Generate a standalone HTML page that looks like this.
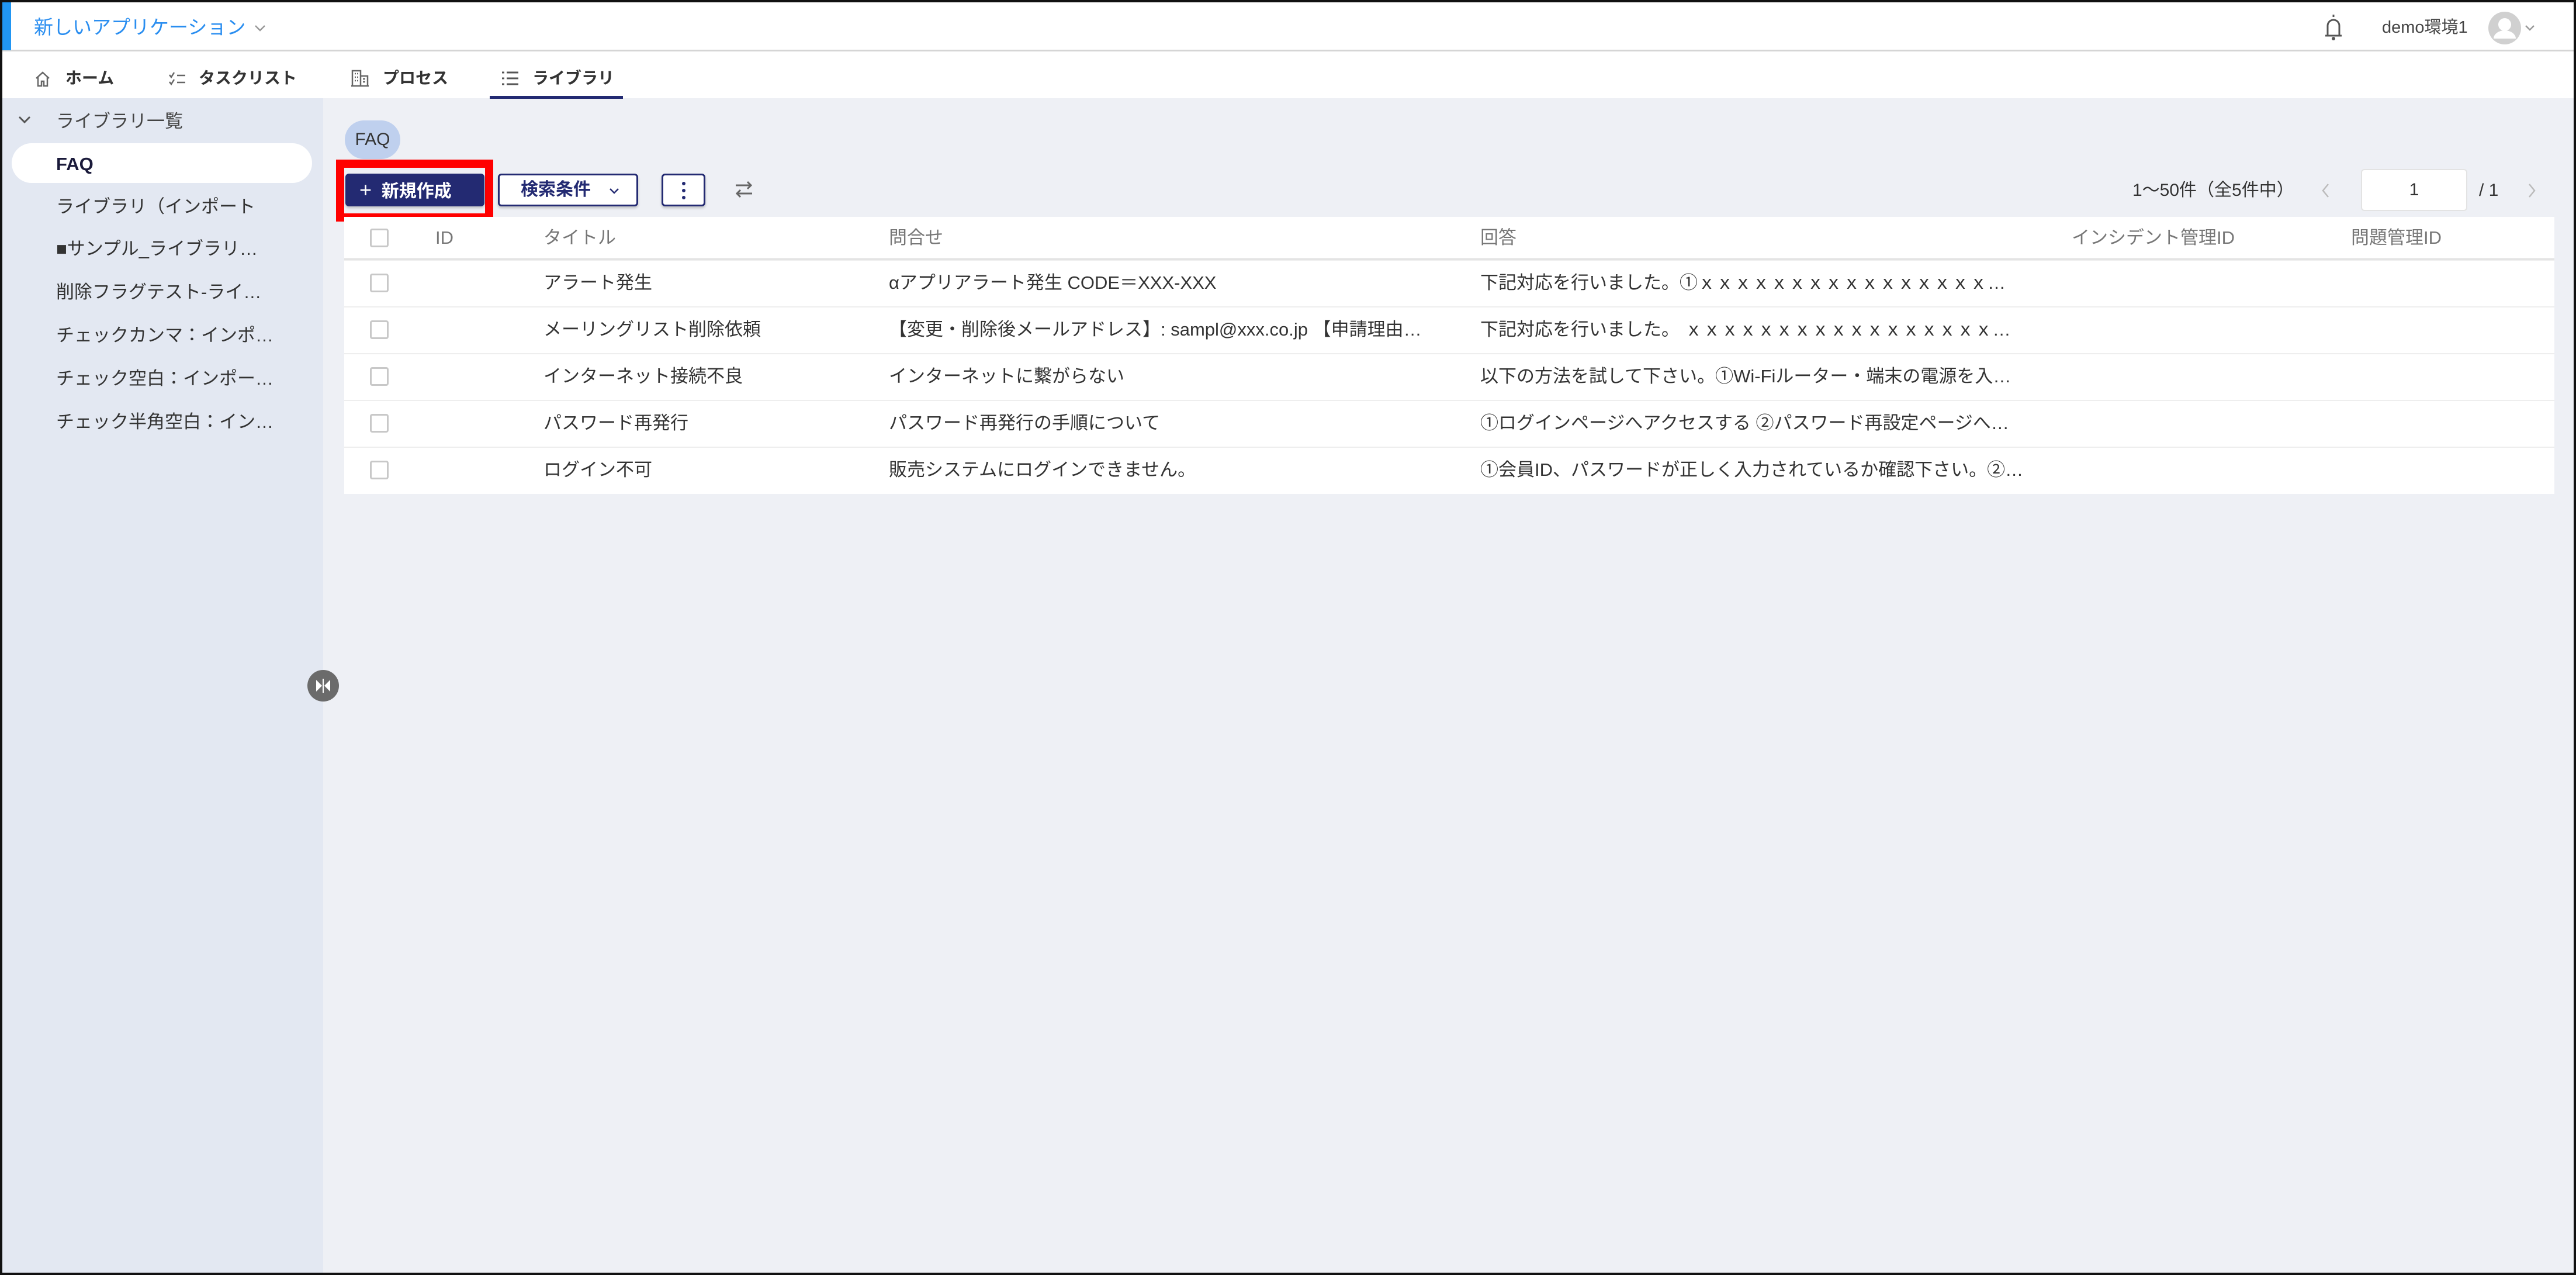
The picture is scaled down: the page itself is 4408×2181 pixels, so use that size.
<!DOCTYPE html>
<html><head><meta charset="utf-8"><style>
*{margin:0;padding:0;box-sizing:border-box}
body{width:4408px;height:2181px;overflow:hidden;background:#eef0f5;font-family:"Liberation Sans","Noto Sans CJK JP",sans-serif;color:#333;position:relative}
.a{position:absolute;white-space:nowrap}
.frame{position:absolute;left:0;top:0;width:4408px;height:2181px;border:4px solid #111;z-index:50;pointer-events:none}
.top{position:absolute;left:0;top:0;width:4408px;height:88px;background:#fff;border-bottom:3px solid #d5d5d5}
.nav{position:absolute;left:0;top:88px;width:4408px;height:80px;background:#fff}
.tab{position:absolute;top:114px;font-size:28px;font-weight:bold;color:#333;line-height:40px;white-space:nowrap}
.side{position:absolute;left:0;top:168px;width:553px;height:2013px;background:#e3e8f2}
.si{position:absolute;left:96px;font-size:31px;color:#333;line-height:44px;width:400px;overflow:hidden;text-overflow:ellipsis;white-space:nowrap}
.table{position:absolute;left:589px;top:371px;width:3782px;height:474px;background:#fff}
.row{position:absolute;left:0;width:3782px;height:80px;border-top:2px solid #eeeeee}
.cb{position:absolute;left:44px;width:32px;height:32px;border:3px solid #c8c8c8;border-radius:4px;background:#fff}
.c{position:absolute;font-size:31px;line-height:44px;color:#333;overflow:hidden;text-overflow:ellipsis;white-space:nowrap}
.h{color:#777}
.btn{position:absolute;top:297px;height:56px;border-radius:6px;font-size:30px;font-weight:bold;line-height:50px;box-shadow:0 3px 4px rgba(0,0,0,.2);white-space:nowrap}
</style></head><body>
<div class="frame"></div>
<div class="top"></div>
<div class="a" style="left:4px;top:4px;width:15px;height:82px;background:#2196f3"></div>
<div class="a" style="left:58px;top:24px;font-size:33px;color:#2a8ef0;line-height:46px">新しいアプリケーション</div>
<svg class="a" style="left:434px;top:40px" width="22" height="16" viewBox="0 0 22 16"><path d="M3 4l8 8 8-8" fill="none" stroke="#999" stroke-width="2.5"/></svg>
<svg class="a" style="left:3975px;top:22px" width="36" height="50" viewBox="0 0 36 50"><path d="M18 3v4M8 38V22a10 10 0 0 1 20 0v16M4 39h28" fill="none" stroke="#555" stroke-width="3"/><circle cx="18" cy="44" r="3" fill="#555"/></svg>
<div class="a" style="left:4076px;top:26px;font-size:29px;color:#444;line-height:42px">demo環境1</div>
<svg class="a" style="left:4258px;top:20px" width="56" height="56" viewBox="0 0 56 56"><circle cx="28" cy="28" r="28" fill="#d0d0d0"/><circle cx="28" cy="22" r="11" fill="#fff"/><path d="M9 46a19 14 0 0 1 38 0" fill="#fff"/></svg>
<svg class="a" style="left:4318px;top:40px" width="22" height="16" viewBox="0 0 22 16"><path d="M4 4l7 7 7-7" fill="none" stroke="#999" stroke-width="2.5"/></svg>

<div class="nav"></div>
<svg class="a" style="left:58px;top:120px" width="30" height="30" viewBox="0 0 30 30"><path d="M4 14L15 4l11 10M7 12v15h6v-8h4v8h6V12" fill="none" stroke="#666" stroke-width="2.5"/></svg>
<div class="tab" style="left:112px">ホーム</div>
<svg class="a" style="left:288px;top:120px" width="32" height="30" viewBox="0 0 32 30"><path d="M2 8l3 4 5-8M2 20l3 4 5-8M15 9h14M15 21h14" fill="none" stroke="#666" stroke-width="2.5"/></svg>
<div class="tab" style="left:340px">タスクリスト</div>
<svg class="a" style="left:600px;top:118px" width="32" height="32" viewBox="0 0 32 32"><path d="M3 29V3h14v26M17 12h12v17M1 29h30M7 8h2M11 8h2M7 14h2M11 14h2M7 20h2M11 20h2M21 17h4M21 22h4" fill="none" stroke="#666" stroke-width="2.5"/></svg>
<div class="tab" style="left:655px">プロセス</div>
<svg class="a" style="left:857px;top:120px" width="32" height="28" viewBox="0 0 32 28"><path d="M2 4h4M10 4h20M2 14h4M10 14h20M2 24h4M10 24h20" fill="none" stroke="#555" stroke-width="3"/></svg>
<div class="tab" style="left:911px">ライブラリ</div>
<div class="a" style="left:838px;top:164px;width:228px;height:5px;background:#232a72"></div>

<div class="side"></div>
<svg class="a" style="left:30px;top:196px" width="24" height="18" viewBox="0 0 24 18"><path d="M3 4l9 9 9-9" fill="none" stroke="#555" stroke-width="3"/></svg>
<div class="si" style="top:186px;color:#444">ライブラリ一覧</div>
<div class="a" style="left:20px;top:245px;width:514px;height:68px;background:#fff;border-radius:34px"></div>
<div class="si" style="top:259px;font-weight:bold;color:#1a1a3a">FAQ</div>
<div class="si" style="top:332px">ライブラリ（インポート</div>
<div class="si" style="top:404px;width:372px">■サンプル_ライブラリ（インポート）</div>
<div class="si" style="top:478px;width:370px">削除フラグテスト-ライブラリ</div>
<div class="si" style="top:552px;width:385px">チェックカンマ：インポート</div>
<div class="si" style="top:626px;width:385px">チェック空白：インポート用</div>
<div class="si" style="top:700px;width:385px">チェック半角空白：インポート</div>
<svg class="a" style="left:525px;top:1145px" width="56" height="56" viewBox="0 0 56 56"><circle cx="28" cy="28" r="27" fill="#6b6b6b"/><path d="M16 18l10 10-10 10zM40 18L30 28l10 10z" fill="#fff"/><path d="M28 16v24" stroke="#fff" stroke-width="2"/></svg>

<div class="a" style="left:590px;top:206px;width:95px;height:66px;border-radius:33px;background:#bfd0ee;font-size:30px;line-height:66px;text-align:center;color:#333">FAQ</div>

<div class="a" style="left:575px;top:273px;width:269px;height:106px;border:14px solid #f00"></div>
<div class="btn" style="left:591px;width:238px;background:#232a72;color:#fff;padding-left:24px;line-height:56px"><span style="font-weight:normal;font-size:36px">+</span>&nbsp; 新規作成</div>
<div class="btn" style="left:852px;width:240px;background:#fff;border:3px solid #232a72;color:#232a72;padding-left:36px">検索条件 <svg width="20" height="14" viewBox="0 0 20 14" style="margin-left:22px"><path d="M3 3l7 7 7-7" fill="none" stroke="#232a72" stroke-width="2.5"/></svg></div>
<div class="btn" style="left:1132px;width:75px;background:#fff;border:3px solid #232a72"><svg class="a" style="left:32px;top:10px" width="6" height="32" viewBox="0 0 6 32"><circle cx="3" cy="4" r="3" fill="#232a72"/><circle cx="3" cy="16" r="3" fill="#232a72"/><circle cx="3" cy="28" r="3" fill="#232a72"/></svg></div>
<svg class="a" style="left:1255px;top:307px" width="36" height="34" viewBox="0 0 36 34"><path d="M4 10h26M24 4l6 6-6 6M32 24H6M12 18l-6 6 6 6" fill="none" stroke="#666" stroke-width="3"/></svg>

<div class="a" style="left:3649px;top:304px;font-size:30px;line-height:44px;color:#333">1〜50件（全5件中）</div>
<svg class="a" style="left:3970px;top:312px" width="20" height="28" viewBox="0 0 20 28"><path d="M14 3L5 14l9 11" fill="none" stroke="#bbb" stroke-width="2.5"/></svg>
<div class="a" style="left:4040px;top:289px;width:182px;height:72px;background:#fff;border:2px solid #e3e3e3;border-radius:6px;font-size:30px;text-align:center;line-height:68px">1</div>
<div class="a" style="left:4242px;top:304px;font-size:30px;line-height:44px">/ 1</div>
<svg class="a" style="left:4322px;top:312px" width="20" height="28" viewBox="0 0 20 28"><path d="M6 3l9 11-9 11" fill="none" stroke="#bbb" stroke-width="2.5"/></svg>

<div class="table">
 <div class="cb" style="top:20px"></div>
 <div class="c h" style="left:156px;top:14px">ID</div>
 <div class="c h" style="left:341px;top:14px">タイトル</div>
 <div class="c h" style="left:932px;top:14px">問合せ</div>
 <div class="c h" style="left:1944px;top:14px">回答</div>
 <div class="c h" style="left:2956px;top:14px">インシデント管理ID</div>
 <div class="c h" style="left:3434px;top:14px">問題管理ID</div>
 <div class="a" style="left:0;top:71px;width:3782px;height:3px;background:#ddd"></div>

 <div class="row" style="top:73px"><div class="cb" style="top:22px"></div><div class="c" style="left:341px;top:16px">アラート発生</div><div class="c" style="left:932px;top:16px">αアプリアラート発生 CODE＝XXX-XXX</div><div class="c" style="left:1944px;top:16px;width:910px">下記対応を行いました。①ｘｘｘｘｘｘｘｘｘｘｘｘｘｘｘｘｘｘｘｘｘｘ</div></div>
 <div class="row" style="top:153px"><div class="cb" style="top:22px"></div><div class="c" style="left:932px;top:16px;width:920px">【変更・削除後メールアドレス】: sampl@xxx.co.jp 【申請理由】あいうえお</div><div class="c" style="left:341px;top:16px">メーリングリスト削除依頼</div><div class="c" style="left:1944px;top:16px;width:910px">下記対応を行いました。 ｘｘｘｘｘｘｘｘｘｘｘｘｘｘｘｘｘｘｘｘｘｘ</div></div>
 <div class="row" style="top:233px"><div class="cb" style="top:22px"></div><div class="c" style="left:341px;top:16px">インターネット接続不良</div><div class="c" style="left:932px;top:16px">インターネットに繋がらない</div><div class="c" style="left:1944px;top:16px;width:910px">以下の方法を試して下さい。①Wi-Fiルーター・端末の電源を入れ直す</div></div>
 <div class="row" style="top:313px"><div class="cb" style="top:22px"></div><div class="c" style="left:341px;top:16px">パスワード再発行</div><div class="c" style="left:932px;top:16px">パスワード再発行の手順について</div><div class="c" style="left:1944px;top:16px;width:930px">①ログインページへアクセスする ②パスワード再設定ページへ移動する</div></div>
 <div class="row" style="top:393px;height:81px"><div class="cb" style="top:22px"></div><div class="c" style="left:341px;top:16px">ログイン不可</div><div class="c" style="left:932px;top:16px">販売システムにログインできません。</div><div class="c" style="left:1944px;top:16px;width:930px">①会員ID、パスワードが正しく入力されているか確認下さい。②ブラウザ</div></div>
</div>
</body></html>
